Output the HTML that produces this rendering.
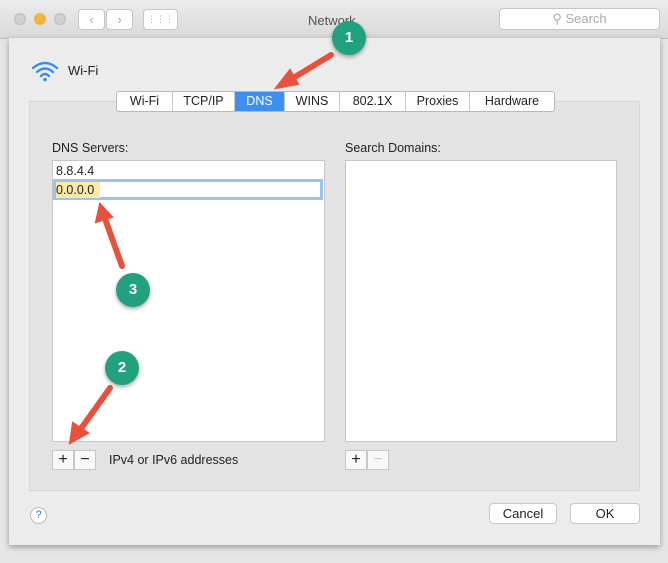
<!DOCTYPE html>
<html><head><style>
body{margin:0;width:668px;height:563px;background:#e6e6e6;font-family:"Liberation Sans",sans-serif;font-size:12.5px;color:#222;position:relative;overflow:hidden}
.a{position:absolute}
.tb{left:0;top:0;width:668px;height:38px;background:linear-gradient(#ececec,#d9d9d9);border-bottom:1px solid #bdbdbd}
.sheet{left:9px;top:38px;width:651px;height:507px;background:#ececec;box-shadow:0 2px 6px rgba(0,0,0,.35)}
.panel{left:29px;top:101px;width:611px;height:390px;background:#e3e3e3;border:1px solid #d6d6d6;box-sizing:border-box}
.tabs{left:116px;top:91px;height:19px;display:flex;background:#fff;border:1px solid #b8b8b8;border-radius:3px;overflow:hidden}
.tabs div{border-right:1px solid #c8c8c8;text-align:center;line-height:19px;font-size:12.5px}
.list{background:#fff;border:1px solid #c6c6c6;box-sizing:border-box}
.btn{background:#fff;border:1px solid #c6c6c6;box-sizing:border-box;border-radius:4px;text-align:center;line-height:19px;font-size:13px}
.pm{width:22px;height:20px;background:#f8f8f8;border:1px solid #c6c6c6;box-sizing:border-box;text-align:center;line-height:18px;font-size:16px}
.c{width:34px;height:34px;border-radius:50%;background:#22a180;color:#fff;text-align:center;line-height:34px;font-weight:bold;font-size:15px;box-shadow:0 2px 4px rgba(0,0,0,.35)}
</style></head><body>
<div class="a tb"></div>
<div class="a" style="left:14px;top:13px;width:12px;height:12px;border-radius:50%;background:#d0d0d0;border:1px solid #bbb;box-sizing:border-box"></div>
<div class="a" style="left:34px;top:13px;width:12px;height:12px;border-radius:50%;background:#f0b43a"></div>
<div class="a" style="left:54px;top:13px;width:12px;height:12px;border-radius:50%;background:#d0d0d0;border:1px solid #bbb;box-sizing:border-box"></div>
<div class="a btn" style="left:78px;top:9px;width:27px;height:21px;color:#aaa;line-height:19px">&#8249;</div>
<div class="a btn" style="left:106px;top:9px;width:27px;height:21px;color:#aaa;line-height:19px">&#8250;</div>
<div class="a btn" style="left:143px;top:9px;width:35px;height:21px;color:#aaa;font-size:9px">⋮⋮⋮</div>
<div class="a" style="left:308px;top:13px;color:#555;font-size:13px">Network</div>
<div class="a btn" style="left:499px;top:8px;width:161px;height:22px;color:#aaa;line-height:20px">&#9906; Search</div>
<div class="a sheet"></div>
<svg class="a" style="left:30px;top:60px" width="30" height="22" viewBox="0 0 30 22"><g fill="none" stroke="#3a8ee6" stroke-width="2.4" stroke-linecap="round"><path d="M3 8 Q15 -2 27 8"/><path d="M7 12 Q15 5 23 12"/><path d="M11 16 Q15 12 19 16"/></g><circle cx="15" cy="19.5" r="1.8" fill="#3a8ee6"/></svg>
<div class="a" style="left:68px;top:63px;font-size:13px">Wi-Fi</div>
<div class="a panel"></div>
<div class="a tabs">
<div style="width:55px">Wi-Fi</div><div style="width:61px">TCP/IP</div><div style="width:49px;background:#3d8ff2;color:#fff">DNS</div><div style="width:54px">WINS</div><div style="width:65px">802.1X</div><div style="width:63px">Proxies</div><div style="width:84px;border:0">Hardware</div>
</div>
<div class="a" style="left:52px;top:141px">DNS Servers:</div>
<div class="a" style="left:345px;top:141px">Search Domains:</div>
<div class="a list" style="left:52px;top:160px;width:273px;height:282px"></div>
<div class="a list" style="left:345px;top:160px;width:272px;height:282px"></div>
<div class="a" style="left:56px;top:164px">8.8.4.4</div>
<div class="a" style="left:53px;top:179px;width:270px;height:21px;border:3px solid #9cc3ea;box-sizing:border-box;background:#fff"></div>
<div class="a" style="left:56px;top:182px;width:44px;height:16px;background:#fbe9a8"></div>
<div class="a" style="left:56px;top:183px">0.0.0.0</div>
<div class="a pm" style="left:52px;top:450px">+</div><div class="a pm" style="left:74px;top:450px">−</div>
<div class="a" style="left:109px;top:453px">IPv4 or IPv6 addresses</div>
<div class="a pm" style="left:345px;top:450px">+</div><div class="a pm" style="left:367px;top:450px;color:#ccc">−</div>
<div class="a" style="left:30px;top:507px;width:15px;height:15px;border-radius:50%;background:#fff;border:1px solid #bbb;color:#3a7bd5;text-align:center;line-height:15px;font-size:11px">?</div>
<div class="a btn" style="left:489px;top:503px;width:68px;height:21px">Cancel</div>
<div class="a btn" style="left:570px;top:503px;width:70px;height:21px">OK</div>
<svg class="a" style="left:0;top:0" width="668" height="563"><g stroke="#e8513d" stroke-width="6" stroke-linecap="round" fill="#e8513d">
<path d="M331 55 L290 80" fill="none"/><path d="M276 88 L290 70 L298 84Z" stroke-width="2"/>
<path d="M122 266 L104 216" fill="none"/><path d="M100 204 L96 222 L112 217Z" stroke-width="2"/>
<path d="M110 388 L80 430" fill="none"/><path d="M70 443 L73 423 L88 433Z" stroke-width="2"/>
</g></svg>
<div class="a c" style="left:332px;top:21px">1</div>
<div class="a c" style="left:116px;top:273px">3</div>
<div class="a c" style="left:105px;top:351px">2</div>
</body></html>
